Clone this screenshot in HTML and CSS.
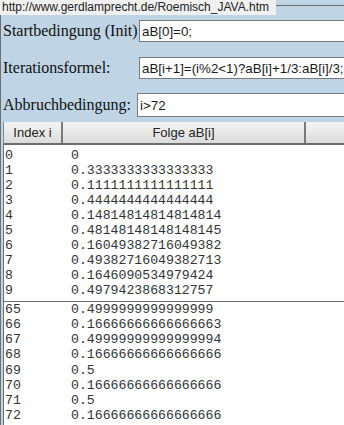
FILE: index.html
```html
<!DOCTYPE html>
<html lang="de">
<head>
    <meta charset="UTF-8">
    <meta name="viewport" content="width=device-width, initial-scale=1.0">
    <title>Roemisch JAVA</title>
    <link rel="stylesheet" href="styles.css">
</head>
<body>
    <div class="url">http://www.gerdlamprecht.de/Roemisch_JAVA.htm</div>
    <div class="frame">
        <div class="field first">
            <label for="init">Startbedingung (Init)</label>
            <input type="text" id="init" value="aB[0]=0;">
        </div>
        <div class="field">
            <label for="iter">Iterationsformel:</label>
            <input type="text" id="iter" value="aB[i+1]=(i%2<1)?aB[i]+1/3:aB[i]/3;">
        </div>
        <div class="field short">
            <label for="stop">Abbruchbedingung:</label>
            <input type="text" id="stop" value="i>72">
        </div>

        <div class="grid">
            <div class="head">
                <div class="col idx">Index i</div>
                <div class="col val">Folge aB[i]</div>
                <div class="col rest"></div>
            </div>
            <div class="list">
                <div class="row"><span>0</span><span>0</span></div>
                <div class="row"><span>1</span><span>0.3333333333333333</span></div>
                <div class="row"><span>2</span><span>0.1111111111111111</span></div>
                <div class="row"><span>3</span><span>0.4444444444444444</span></div>
                <div class="row"><span>4</span><span>0.14814814814814814</span></div>
                <div class="row"><span>5</span><span>0.48148148148148145</span></div>
                <div class="row"><span>6</span><span>0.16049382716049382</span></div>
                <div class="row"><span>7</span><span>0.49382716049382713</span></div>
                <div class="row"><span>8</span><span>0.1646090534979424</span></div>
                <div class="row"><span>9</span><span>0.4979423868312757</span></div>
            </div>
            <div class="list tail">
                <div class="row"><span>65</span><span>0.4999999999999999</span></div>
                <div class="row"><span>66</span><span>0.16666666666666663</span></div>
                <div class="row"><span>67</span><span>0.49999999999999994</span></div>
                <div class="row"><span>68</span><span>0.16666666666666666</span></div>
                <div class="row"><span>69</span><span>0.5</span></div>
                <div class="row"><span>70</span><span>0.16666666666666666</span></div>
                <div class="row"><span>71</span><span>0.5</span></div>
                <div class="row"><span>72</span><span>0.16666666666666666</span></div>
            </div>
        </div>
    </div>
</body>
</html>
```

FILE: styles.css
```css
body {
    margin: 0;
    background-color: #bfd4e4; /* light blue page */
    color: #111;
    overflow: hidden;
    height: 425px;
    position: relative;
}
.url {
    position: absolute;
    top: 0;
    left: 0;
    width: 274px;
    height: 15px;
    padding-left: 2px;
    background-color: #f0f0f0;
    font-family: 'Liberation Sans', Arial, sans-serif;
    font-size: 12px;
    line-height: 15px;
    color: #222;
    white-space: nowrap;
}
.frame {
    margin-top: 5px;
    border-top: 1px solid #6f6f6f;
    border-left: 1px solid #6f6f6f;
    padding-left: 2px;
    height: 420px;
    overflow: hidden;
}
.field {
    display: flex;
    align-items: center;
    height: 22px;
    margin-top: 15px;
}
.field.first {
    margin-top: 14px;
}
.field label {
    flex: none;
    width: 136px;
    font-family: 'Liberation Serif', 'Times New Roman', serif;
    font-size: 16px;
    white-space: nowrap;
}
.field.short label {
    width: 134px;
}
.field input {
    flex: 1;
    min-width: 0;
    height: 22px;
    margin: 0;
    padding: 0 0 0 2px;
    border: 1px solid #7a7a7a;
    border-right: none; /* box runs on past the window edge */
    box-sizing: border-box;
    background-color: #fff;
    font-family: 'Liberation Sans', Arial, sans-serif;
    font-size: 13.33px;
    color: #1a1a1a;
    outline: none;
}
.field.short input {
    height: 24px;
}
.grid {
    margin-top: 6px;
}
.head {
    display: flex;
    height: 23px;
    box-sizing: border-box;
    border-left: 1px solid #8c8c8c;
    border-bottom: 2px solid #6e6e6e;
    background: linear-gradient(#f4f4f4, #dcdcdc);
    font-family: 'Liberation Sans', Arial, sans-serif;
    font-size: 13px;
    color: #222;
}
.col {
    display: flex;
    align-items: center;
    justify-content: center;
}
.idx {
    width: 57px;
    border-right: 2px solid #7a7a7a;
}
.val {
    width: 241px;
    border-right: 2px solid #7a7a7a;
}
.rest {
    flex: 1;
}
.list {
    background-color: #fff;
    border-left: 1px solid #6f6f6f;
    padding: 3px 0 3px 1px;
    font-family: 'Liberation Mono', 'Courier New', monospace;
    font-size: 13.2px;
    line-height: 15px;
    color: #333;
}
.list.tail {
    border-top: 1px solid #6a6a6a;
    padding-top: 0;
    line-height: 15.15px;
}
.row {
    display: grid;
    grid-template-columns: 66px 1fr;
    white-space: pre;
}
```
